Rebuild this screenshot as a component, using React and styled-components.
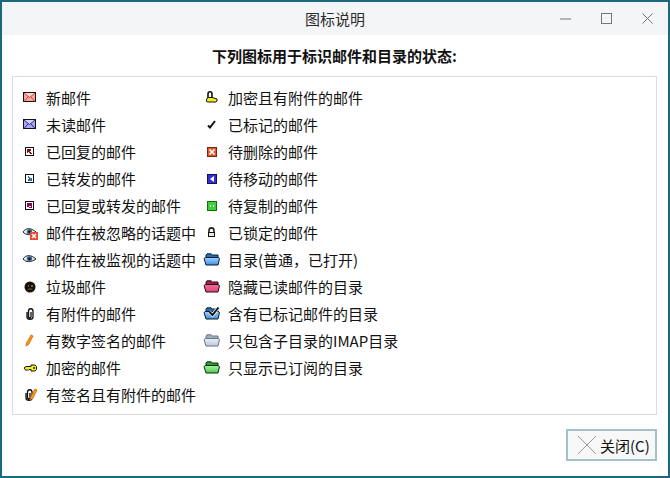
import React from 'react';
import styled, { createGlobalStyle } from 'styled-components';

const Global = createGlobalStyle`
  html, body { margin: 0; padding: 0; background: #fff; }
  body { font-family: "Noto Sans CJK SC", "Noto Sans", sans-serif; }
`;

const Win = styled.div`
  box-sizing: border-box; width: 670px; height: 478px; background: #fff;
  border: 2px solid #1c6880;
  display: flex; flex-direction: column;
`;
const TitleBar = styled.div`
  height: 33px; flex: none; background: #f4f5f7; position: relative;
  display: flex; align-items: center; justify-content: center;
  font-size: 15px; color: #2b2b2b;
`;
const WinButtons = styled.div`
  position: absolute; right: 0; top: 0; height: 33px; display: flex; align-items: center;
`;
const WinBtn = styled.div`
  width: 41px; height: 33px; display: flex; align-items: center; justify-content: center;
`;
const Body = styled.div`
  flex: 1; display: flex; flex-direction: column; padding: 0 11px 15px 10px;
`;
const Heading = styled.div`
  height: 41px; flex: none; display: flex; align-items: center; justify-content: center;
  font-size: 15px; font-weight: 700; color: #111;
`;
const Box = styled.div`
  box-sizing: border-box; height: 339px; border: 1px solid #dcdcdc;
  padding: 7px 0 0 9px; display: flex;
`;
const Col = styled.div`
  width: ${p => p.$w}px; display: flex; flex-direction: column;
`;
const Row = styled.div`
  height: 27px; display: flex; align-items: center; font-size: 15px; color: #111; white-space: nowrap;
`;
const IconBox = styled.span`
  width: 16px; flex: none; display: flex; align-items: center; justify-content: flex-start;
`;
const Label = styled.span`
  margin-left: ${p => p.$gap}px;
`;
const Footer = styled.div`
  flex: 1; display: flex; justify-content: flex-end; align-items: flex-end;
`;
const CloseBtn = styled.div`
  box-sizing: border-box; width: 91px; height: 32px; background: #f8f8f8;
  border: 2px solid #a3c0cc; display: flex; align-items: center; justify-content: flex-start;
  padding-left: 10px; gap: 4px; font-size: 15px; color: #111;
`;

const S = ({ children, w = 16, h = 16 }) => (
  <svg width={w} height={h} viewBox={`0 0 ${w} ${h}`} shapeRendering="crispEdges" style={{ display: 'block', overflow: 'visible' }}>{children}</svg>
);
const Env = ({ light, mid, stroke }) => (
  <S>
    <rect x="1.500" y="2.500" width="12" height="9" fill={mid} stroke="#111" />
    <path d="M2 3h11l-5.500 4z" fill={light} />
    <path d="M2 3l5.500 4.500L13 3M2 11.500l4-4.500M13 11.500L9 7" fill="none" stroke={stroke} shapeRendering="auto" />
  </S>
);
const Sq = ({ inner, d }) => (
  <S><rect x="3.500" y="3.500" width="8" height="8" fill="#fff" stroke="#111" />{d && <path d={d} fill={inner} />}</S>
);
const Eye = () => (
  <g shapeRendering="auto">
    <path d="M1 7c3-4.500 8-4.500 13 0-5 3.500-10 3.500-13 0z" fill="#e4eaf4" stroke="#222" />
    <circle cx="7.500" cy="6.800" r="2.700" fill="#456a92" />
    <circle cx="7.500" cy="6.800" r="1.200" fill="#111" />
  </g>
);
const Clip = ({ x = 0 }) => (
  <path transform={`translate(${x} 0)`} d="M5 6v5c0 3 6 3 6 0V5c0-3-4.500-3-4.500 0v6c0 1 2.500 1 2.500 0V6" fill="#fff" stroke="#111" strokeWidth="1.300" shapeRendering="auto" />
);
const Pen = ({ x = 0 }) => (
  <g transform={`translate(${x} 0)`} shapeRendering="auto">
    <path d="M10 2l2 1-4 8-2.500 2-.5-.5.500-2.500z" fill="#f0a010" stroke="#d04a0a" strokeWidth=".7" />
  </g>
);
const Key = () => (
  <S><g shapeRendering="auto"><path d="M2 8l2-1.500h5V5h4l1.500 1.500v3L13 11H9V9.500H7l-1 1-1-1-1 1z" fill="#f7ee1e" stroke="#111" strokeWidth="1" /><circle cx="12" cy="8" r=".9" fill="#111" /></g></S>
);
const Lock = () => (
  <g>
    <path d="M6 7V5.500c0-3.500 5-3.500 5 0V7" fill="none" stroke="#222" strokeWidth="1.600" shapeRendering="auto" />
    <rect x="5.500" y="7.500" width="6" height="4" fill="#ece8d8" stroke="#111" />
  </g>
);
const FLD = ({ id, top, bottom, back, line, over }) => (
  <svg width="18" height="15" viewBox="0 0 18 15" style={{ display: 'block', overflow: 'visible' }}>
    <defs>
      <linearGradient id={id} x1="0" y1="0" x2="0" y2="1">
        <stop offset="0" stopColor={top} />
        <stop offset="1" stopColor={bottom} />
      </linearGradient>
    </defs>
    <path d="M3 5V3l1-1.200h4L9.500 3H15v3H3z" fill={back} stroke={line} strokeWidth="1" />
    <path d="M1 6.500l1.500-1H15l1.500 1-1.500 6.500H3z" fill={`url(#${id})`} stroke={line} strokeWidth="1" />
    {over}
  </svg>
);

const left = [
  ['新邮件', <Env light="#fbd6d0" mid="#f4a9a0" stroke="#d0453c" />],
  ['未读邮件', <Env light="#d4d4f6" mid="#a9a9ea" stroke="#2a2ab0" />],
  ['已回复的邮件', <Sq d="M5 5h4v1.500L8 7l2 2.500-1 1L6.500 8l-.5 1H5z" inner="#8a0a12" />],
  ['已转发的邮件', <Sq d="M10 10H6V8.500L7 8 5 6l1-1 2.500 2.500.5-1h1z" inner="#356a9a" />],
  ['已回复或转发的邮件', <Sq d="M5 5h5v2.500L5 9zM6 10l4-2v2z" inner="#8a0a52" />],
  ['邮件在被忽略的话题中', <S><Eye /><rect x="8" y="7" width="8" height="8" fill="#ea4a30" /><path d="M10 9l4 4m0-4l-4 4" stroke="#fff" strokeWidth="1.500" shapeRendering="auto" /></S>],
  ['邮件在被监视的话题中', <S><Eye /></S>],
  ['垃圾邮件', <S><circle cx="8" cy="8" r="5.500" fill="#111" shapeRendering="auto" /><path d="M5.500 6h1.500v1.500H5.500zM9 6h1.500v1.500H9z" fill="#8a6410" /><path d="M5.500 11c1-1.500 4-1.500 5 0" fill="none" stroke="#8a6410" shapeRendering="auto" /></S>],
  ['有附件的邮件', <S><Clip /></S>],
  ['有数字签名的邮件', <S><Pen x={-1} /></S>],
  ['加密的邮件', <Key />],
  ['有签名且有附件的邮件', <S><Clip x={-1} /><Pen x={3} /></S>],
];
const right = [
  ['加密且有附件的邮件', <S><path d="M5 8V4c0-3 4-3 4 0v4" fill="none" stroke="#111" strokeWidth="1.600" shapeRendering="auto" /><path d="M3.500 11.500V9l2-1.500h3.500L14 9v2l-1 1H5z" fill="#f7ee1e" stroke="#111" strokeWidth="1" shapeRendering="auto" /></S>],
  ['已标记的邮件', <S><path d="M5 8.500l2 2 5-6.500" fill="none" stroke="#111" strokeWidth="2" shapeRendering="auto" /></S>],
  ['待删除的邮件', <S><rect x="4.500" y="3.500" width="9" height="9" fill="#dc5a2c" stroke="#73270a" /><path d="M6.500 5.500l5 5m0-5l-5 5" stroke="#fff" strokeWidth="1.700" shapeRendering="auto" /></S>],
  ['待移动的邮件', <S><rect x="4.500" y="3.500" width="9" height="9" fill="#3232d2" stroke="#10105a" /><path d="M11 5L7 8l4 3z" fill="#fff" shapeRendering="auto" /></S>],
  ['待复制的邮件', <S><rect x="4.500" y="3.500" width="9" height="9" fill="#3ed03a" stroke="#146a14" /><path d="M7 7h1v2H7zM10 7h1v2h-1z" fill="#fff" /></S>],
  ['已锁定的邮件', <S><Lock /></S>],
  ['目录(普通，已打开)', <FLD id="f1" top="#a0d2ff" bottom="#3f8fe6" back="#2a6cb4" line="#0e1a2c" />],
  ['隐藏已读邮件的目录', <FLD id="f2" top="#f06c96" bottom="#e04878" back="#a81e50" line="#2c0a18" />],
  ['含有已标记邮件的目录', <FLD id="f3" top="#a0d2ff" bottom="#3f8fe6" back="#2a6cb4" line="#0e1a2c" over={<g><path d="M6.500 6l3 3 6-7.500" fill="none" stroke="#fff" strokeWidth="3.400" /><path d="M6.500 6l3 3 6-7.500" fill="none" stroke="#111" strokeWidth="2" /></g>} />],
  ['只包含子目录的IMAP目录', <FLD id="f4" top="#e6eef8" bottom="#bcc8dc" back="#a0aec4" line="#6b7484" />],
  ['只显示已订阅的目录', <FLD id="f5" top="#a8f4a0" bottom="#50c850" back="#2f9a2e" line="#0e2c0e" />],
];

export default function App() {
  return (
    <Win>
      <Global />
      <TitleBar>
        图标说明
        <WinButtons>
          <WinBtn><svg width="11" height="2" viewBox="0 0 11 2"><rect width="11" height="1" y=".5" fill="#777" /></svg></WinBtn>
          <WinBtn><svg width="11" height="11" viewBox="0 0 11 11"><rect x=".5" y=".5" width="10" height="10" fill="none" stroke="#777" /></svg></WinBtn>
          <WinBtn><svg width="11" height="11" viewBox="0 0 11 11"><path d="M.5.5l10 10m0-10l-10 10" stroke="#777" fill="none" /></svg></WinBtn>
        </WinButtons>
      </TitleBar>
      <Body>
        <Heading>下列图标用于标识邮件和目录的状态:</Heading>
        <Box>
          <Col $w={181}>
            {left.map(([t, i]) => <Row key={t}><IconBox>{i}</IconBox><Label $gap={8}>{t}</Label></Row>)}
          </Col>
          <Col $w={440}>
            {right.map(([t, i]) => <Row key={t}><IconBox>{i}</IconBox><Label $gap={9}>{t}</Label></Row>)}
          </Col>
        </Box>
        <Footer>
          <CloseBtn>
            <svg width="18" height="18" viewBox="0 0 18 18"><path d="M0 0l18 18M18 0L0 18" stroke="#999" strokeWidth="1" fill="none" /></svg>
            关闭(C)
          </CloseBtn>
        </Footer>
      </Body>
    </Win>
  );
}
